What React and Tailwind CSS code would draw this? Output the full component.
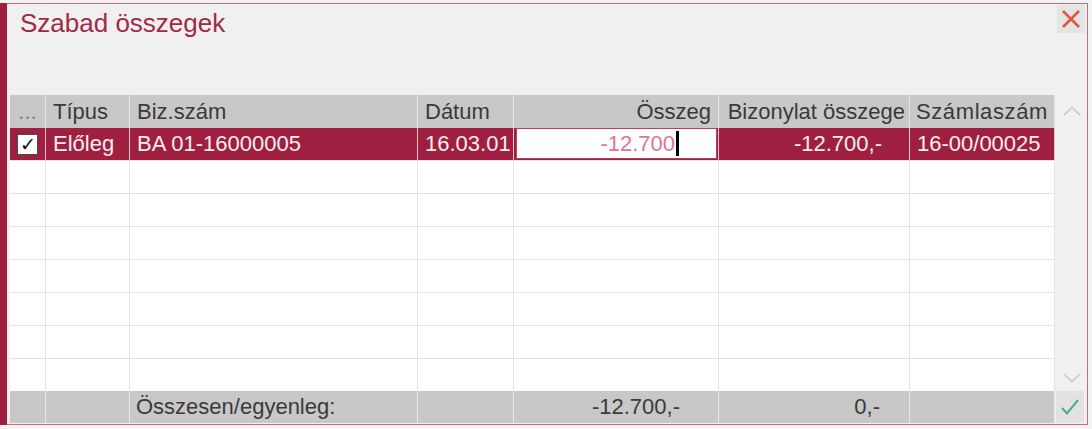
import React from "react";

const cols = "grid grid-cols-[36px_84px_288px_96px_205px_191px_145px]";

function Chevron({ up }) {
  return (
    <svg width="18" height="10" viewBox="0 0 18 10" fill="none">
      <path
        d={up ? "M1 9 L9 1.5 L17 9" : "M1 1 L9 8.5 L17 1"}
        stroke="#c4c4c4"
        strokeWidth="1.4"
      />
    </svg>
  );
}

export default function App() {
  const emptyRows = Array.from({ length: 7 });
  return (
    <div className="w-[1092px] h-[429px] bg-[#f3f3f3] overflow-hidden font-['Liberation_Sans',Arial,sans-serif]">
      <div className="mt-[3px] flex h-[422px] w-[1088px]">
        <div className="w-[7px] bg-[#9e1f3f]" />
        <div className="flex-1 flex flex-col border-y border-r border-[#c9687f] bg-[#f0f0f0]">
          <div className="h-[91px] flex justify-between items-start">
            <div className="pl-[13px] pt-[4px] text-[26px] leading-[30px] text-[#a02a48]">
              Szabad összegek
            </div>
            <div className="mt-[1px] mr-[2px] w-[28px] h-[28px] bg-[#e4e4e4] flex items-center justify-center">
              <svg width="20" height="20" viewBox="0 0 20 20">
                <path d="M2 2 L18 18 M18 2 L2 18" stroke="#e0573f" strokeWidth="2.6" />
              </svg>
            </div>
          </div>
          <div className="flex pl-[3px]">
            <div className="w-[1045px] text-[22px]">
              <div className={`${cols} h-[33px] bg-[#c8c8c8] text-[#3a3a3a] leading-[33px]`}>
                <div className="border-r border-[#e4e4e4] text-center text-[#808080]">...</div>
                <div className="border-r border-[#e4e4e4] pl-[7px]">Típus</div>
                <div className="border-r border-[#e4e4e4] pl-[7px]">Biz.szám</div>
                <div className="border-r border-[#e4e4e4] pl-[7px]">Dátum</div>
                <div className="border-r border-[#e4e4e4] pr-[7px] text-right">Összeg</div>
                <div className="border-r border-[#e4e4e4] pr-[4px] text-right whitespace-nowrap">Bizonylat összege</div>
                <div className="border-r border-[#e4e4e4] pl-[6px] whitespace-nowrap tracking-[0.6px]">Számlaszám</div>
              </div>
              <div className={`${cols} h-[32px] bg-[#9e1f3f] text-[#fcecf0] leading-[32px]`}>
                <div className="border-r border-[#e7c3cc] flex items-center justify-center">
                  <div className="w-[21px] h-[21px] bg-white border border-[#4a4a4a] flex items-center justify-center text-[#111] text-[19px] leading-none">
                    ✓
                  </div>
                </div>
                <div className="border-r border-[#e7c3cc] pl-[7px]">Előleg</div>
                <div className="border-r border-[#e7c3cc] pl-[7px]">BA 01-16000005</div>
                <div className="border-r border-[#e7c3cc] pl-[7px]">16.03.01</div>
                <div className="border-r border-[#e7c3cc] pl-[2px] pr-[1px] flex items-start">
                  <div className="w-full h-[31px] bg-white border border-[#b8405c] flex items-center justify-end pr-[37px] text-[#e2739f] leading-none">
                    <span>-12.700</span>
                    <span className="inline-block w-[3px] h-[25px] bg-black ml-[1px]" />
                  </div>
                </div>
                <div className="border-r border-[#e7c3cc] pr-[27px] text-right">-12.700,-</div>
                <div className="border-r border-[#e7c3cc] pl-[7px]">16-00/00025</div>
              </div>
              {emptyRows.map((_, i) => (
                <div key={i} className={`${cols} h-[33px] bg-white`}>
                  {Array.from({ length: 7 }).map((__, j) => (
                    <div key={j} className="border-r border-t border-[#e3e3e3]" />
                  ))}
                </div>
              ))}
              <div className={`${cols} h-[32px] bg-[#c8c8c8] text-[#3a3a3a] leading-[32px]`}>
                <div className="border-r border-[#e6e6e6]" />
                <div className="border-r border-[#e6e6e6]" />
                <div className="border-r border-[#e6e6e6] pl-[6px]">Összesen/egyenleg:</div>
                <div className="border-r border-[#e6e6e6]" />
                <div className="border-r border-[#e6e6e6] pr-[38px] text-right">-12.700,-</div>
                <div className="border-r border-[#e6e6e6] pr-[29px] text-right">0,-</div>
                <div className="border-r border-[#e6e6e6]" />
              </div>
            </div>
            <div className="flex-1 flex flex-col">
              <div className="h-[296px] flex flex-col items-center justify-between pt-[11px] pb-[8px] pl-[2px]">
                <Chevron up />
                <Chevron />
              </div>
              <div className="h-[32px] flex justify-center pl-[1px] pr-[3px]">
                <div className="w-full bg-[#e2e2e2] flex items-center justify-center">
                  <svg width="20" height="18" viewBox="0 0 20 18">
                    <path d="M2 10 L7 15.5 L18 2" fill="none" stroke="#4caf7a" strokeWidth="2" />
                  </svg>
                </div>
              </div>
            </div>
          </div>
        </div>
      </div>
    </div>
  );
}
